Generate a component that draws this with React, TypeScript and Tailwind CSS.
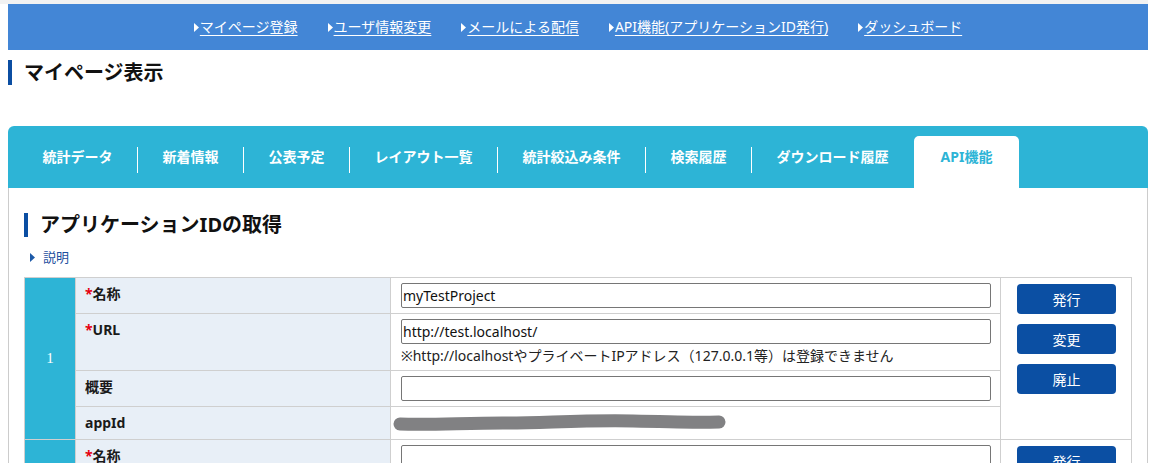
const FONT = "font-['Noto_Sans','Noto_Sans_CJK_JP',sans-serif]"

function Caret({ color }: { color: string }) {
    return (
        <svg width="5" height="9" viewBox="0 0 5 9" className="shrink-0">
            <path d="M0 0 L5 4.5 L0 9 Z" fill={color} />
        </svg>
    )
}

const navLinks = [
    "マイページ登録",
    "ユーザ情報変更",
    "メールによる配信",
    "API機能(アプリケーションID発行)",
    "ダッシュボード",
]

const tabs = [
    { label: "統計データ", w: "w-[119px]" },
    { label: "新着情報", w: "w-[105px]" },
    { label: "公表予定", w: "w-[105px]" },
    { label: "レイアウト一覧", w: "w-[147px]" },
    { label: "統計絞込み条件", w: "w-[147px]" },
    { label: "検索履歴", w: "w-[105px]" },
    { label: "ダウンロード履歴", w: "w-[161px]" },
]

function Label({ text, req }: { text: string; req?: boolean }) {
    return (
        <td className="bg-[#e8eff7] border border-[#cfcfcf] align-top pl-[9px] pt-[6px] text-[14px] leading-[20px] font-bold text-[#1a1a1a]">
            {req && <span className="text-[#e60012]">*</span>}
            {text}
        </td>
    )
}

function Field({ value }: { value?: string }) {
    return (
        <input
            readOnly
            value={value ?? ""}
            className="block w-[590px] h-[25px] border border-[#767676] rounded-[2px] px-[1px] text-[14px] leading-[20px] text-[#111] outline-none"
        />
    )
}

function Group({ num, first }: { num: string; first?: boolean }) {
    return (
        <>
            <tr>
                <td rowSpan={4} className="bg-[#2db4d6] border border-[#cfcfcf] text-center align-middle text-white text-[15px] font-['Liberation_Serif',serif]">
                    {num}
                </td>
                <Label text="名称" req />
                <td className="border border-[#cfcfcf] pl-[10px] py-[5px]">
                    <Field value={first ? "myTestProject" : ""} />
                </td>
                <td rowSpan={4} className="border border-[#cfcfcf] align-top pl-[16px] pt-[6px]">
                    <div className="flex flex-col gap-[10px]">
                        <button className="w-[99px] h-[30px] rounded-[4px] bg-[#0b4fa3] text-white text-[14px]">発行</button>
                        {first && <button className="w-[99px] h-[30px] rounded-[4px] bg-[#0b4fa3] text-white text-[14px]">変更</button>}
                        {first && <button className="w-[99px] h-[30px] rounded-[4px] bg-[#0b4fa3] text-white text-[14px]">廃止</button>}
                    </div>
                </td>
            </tr>
            <tr>
                <Label text="URL" req />
                <td className="border border-[#cfcfcf] pl-[10px] pt-[5px] pb-[4px]">
                    <Field value={first ? "http://test.localhost/" : ""} />
                    <p className="mt-[2px] text-[14px] leading-[20px] text-[#222]">
                        ※http://localhostやプライベートIPアドレス（127.0.0.1等）は登録できません
                    </p>
                </td>
            </tr>
            <tr>
                <Label text="概要" />
                <td className="border border-[#cfcfcf] pl-[10px] py-[5px]">
                    <Field />
                </td>
            </tr>
            <tr>
                <Label text="appId" />
                <td className="border border-[#cfcfcf] pl-[10px] py-[5px] h-[32px]">
                    {first && (
                        <svg width="336" height="22" viewBox="0 0 336 22" className="block -ml-[8px]">
                            <path
                                d="M7 12 C 40 13, 70 11, 110 11 S 190 8, 240 9 S 300 11, 326 10"
                                stroke="#818183"
                                strokeWidth="13"
                                strokeLinecap="round"
                                fill="none"
                            />
                        </svg>
                    )}
                </td>
            </tr>
        </>
    )
}

export default function App() {
    return (
        <div className={`w-[1160px] bg-white ${FONT}`}>
            <div className="h-[4px] w-[1148px] bg-[#f2f2f2]" />
            <nav className="ml-[8px] w-[1140px] h-[46px] bg-[#4386d6] flex items-center justify-center gap-[30px]">
                {navLinks.map((l) => (
                    <a key={l} className="flex items-center text-white text-[14px] leading-[20px] underline underline-offset-[3px]">
                        <Caret color="#ffffff" />
                        <span className="ml-[1px]">{l}</span>
                    </a>
                ))}
            </nav>

            <h1 className="ml-[8px] mt-[10px] h-[25px] border-l-[4px] border-[#0b4ea2] pl-[12px] text-[20px] leading-[25px] font-bold text-[#111]">
                マイページ表示
            </h1>

            <div className="ml-[8px] mt-[41px] w-[1140px]">
                <div className="h-[62px] bg-[#2db4d6] rounded-t-[6px] flex items-start pt-[10px] pl-[10px]">
                    {tabs.map((t, i) => (
                        <div key={t.label} className="flex items-start">
                            {i > 0 && <span className="mt-[11px] h-[26px] w-px bg-white" />}
                            <div className={`${t.w} h-[52px] pt-[11px] text-center text-[14px] leading-[20px] font-bold text-white`}>{t.label}</div>
                        </div>
                    ))}
                    <span className="w-px" />
                    <div className="w-[105px] h-[52px] pt-[11px] text-center bg-white rounded-t-[5px] text-[14px] leading-[20px] font-bold text-[#2db4d6]">
                        API機能
                    </div>
                </div>

                <div className="border-x border-[#cccccc] px-[15px] pt-[25px] pb-[30px]">
                    <h2 className="h-[24px] border-l-[4px] border-[#0b4ea2] pl-[12px] text-[20px] leading-[24px] font-bold text-[#111]">
                        アプリケーションIDの取得
                    </h2>
                    <div className="mt-[10px] ml-[6px] flex items-center gap-[8px] text-[13px] leading-[20px] text-[#1d4f9e]">
                        <Caret color="#1d5aa8" />
                        <span>説明</span>
                    </div>
                    <table className="mt-[10px] w-[1107px] table-fixed border-collapse">
                        <colgroup>
                            <col className="w-[51px]" />
                            <col className="w-[315px]" />
                            <col className="w-[610px]" />
                            <col className="w-[131px]" />
                        </colgroup>
                        <tbody>
                            <Group num="1" first />
                            <Group num="2" />
                        </tbody>
                    </table>
                </div>
            </div>
        </div>
    )
}
